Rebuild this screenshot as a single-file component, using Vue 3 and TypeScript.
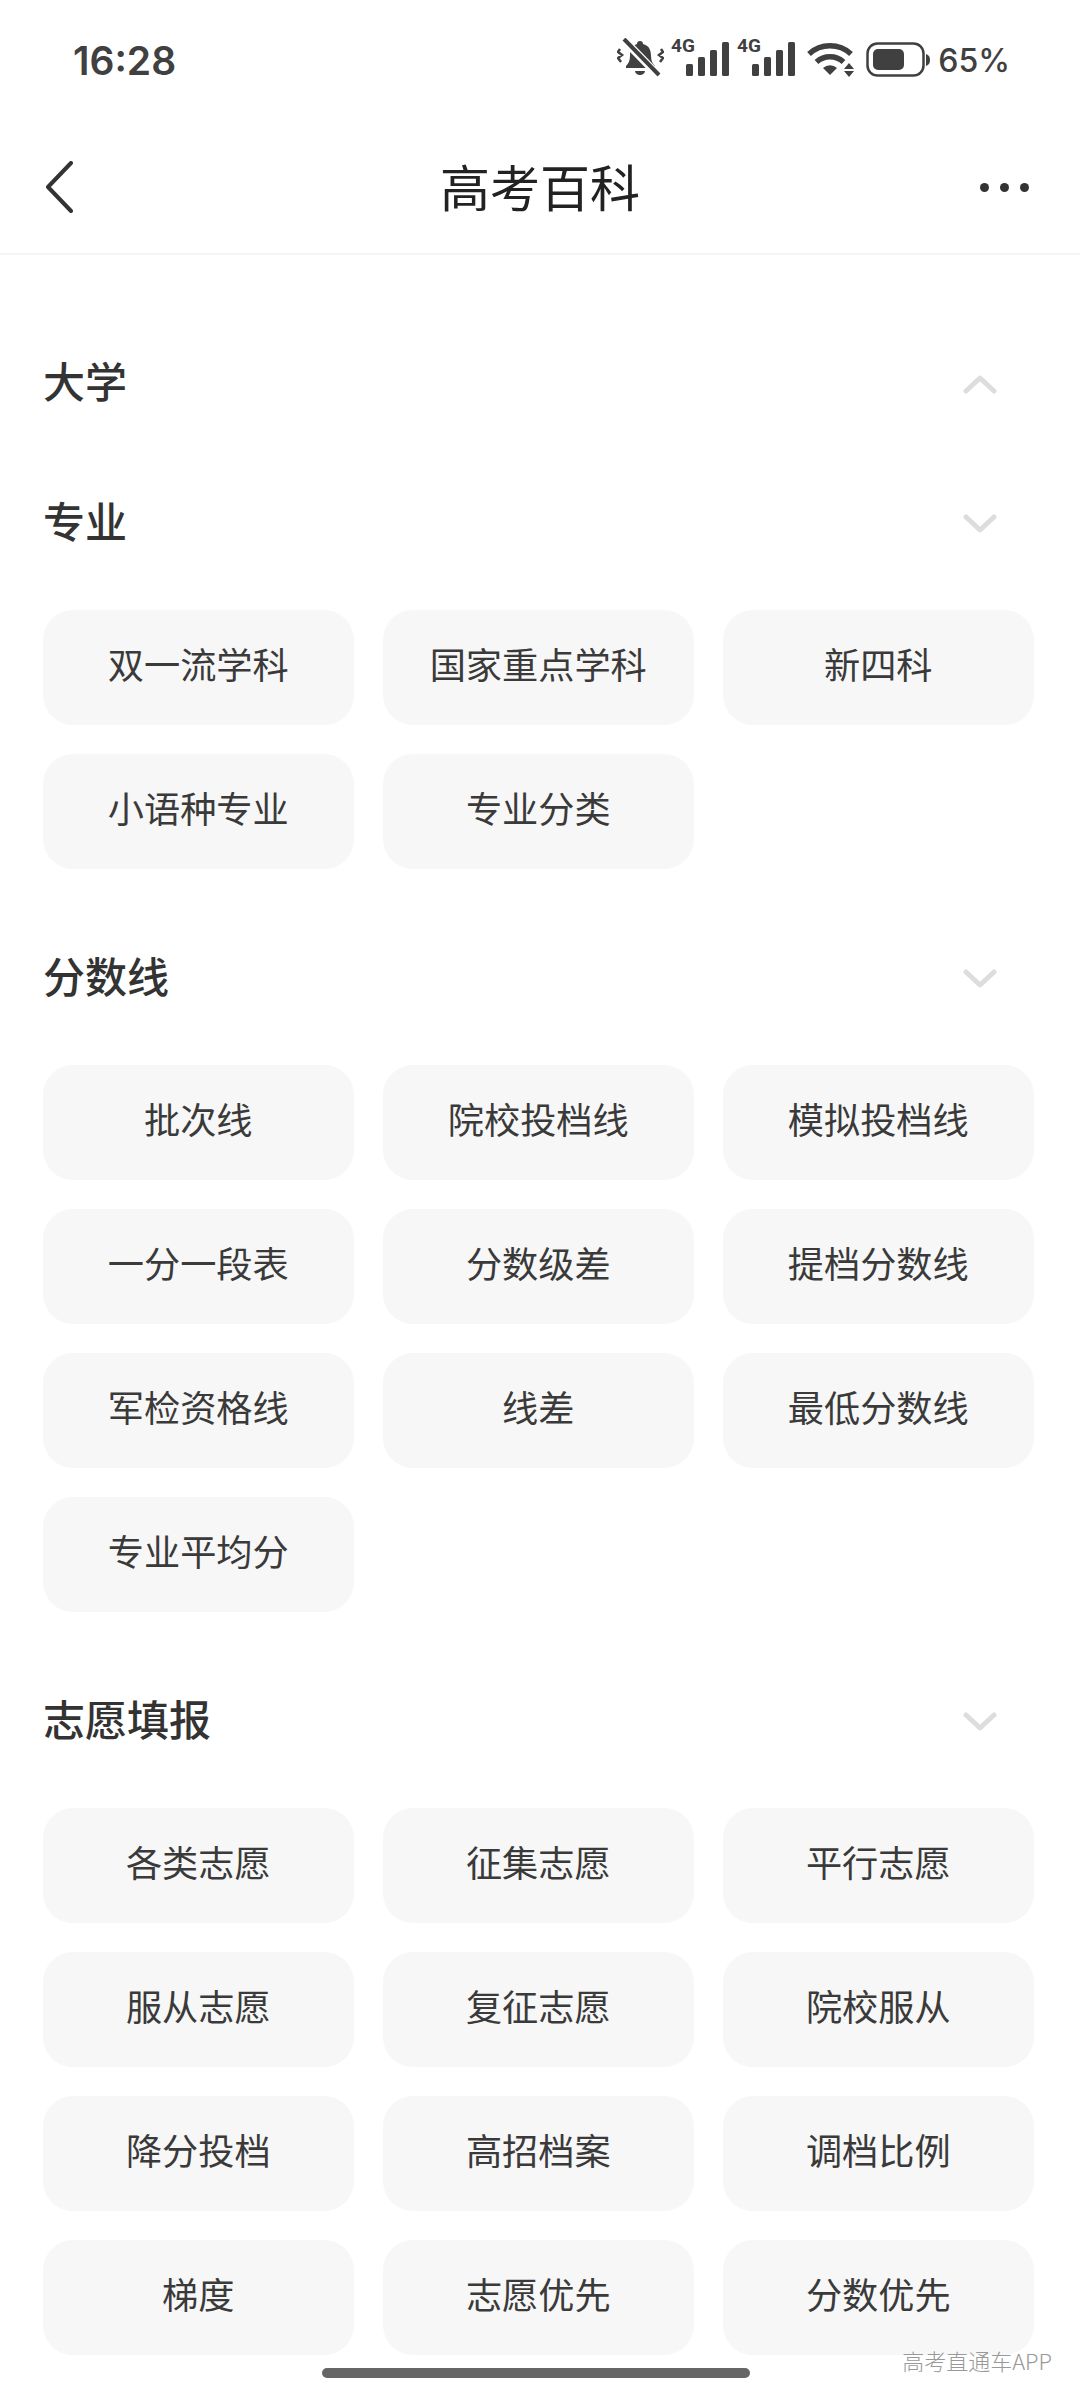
<script setup lang="ts">
interface Section {
  title: string
  open: boolean
  items: string[]
}

const sections: Section[] = [
  { title: '大学', open: true, items: [] },
  { title: '专业', open: false, items: ['双一流学科', '国家重点学科', '新四科', '小语种专业', '专业分类'] },
  {
    title: '分数线',
    open: false,
    items: ['批次线', '院校投档线', '模拟投档线', '一分一段表', '分数级差', '提档分数线', '军检资格线', '线差', '最低分数线', '专业平均分']
  },
  {
    title: '志愿填报',
    open: false,
    items: ['各类志愿', '征集志愿', '平行志愿', '服从志愿', '复征志愿', '院校服从', '降分投档', '高招档案', '调档比例', '梯度', '志愿优先', '分数优先']
  }
]
</script>

<template>
  <div class="page">
    <div class="status">
      <span class="time">16:28</span>
      <div class="status-icons">
        <svg class="bell" width="47" height="40" viewBox="0 0 47 40">
          <path d="M23 3a3 3 0 0 1 3 3c6 1.500 8 6 8 12 0 5 2 8 4 10v2H9v-2c2-2 4-5 4-10 0-6 2-10.500 7-12a3 3 0 0 1 3-3z" fill="#404040" />
          <path d="M18 33h10a5 4 0 0 1-10 0z" fill="#404040" />
          <path d="M7 2l34 35" stroke="#fff" stroke-width="8" />
          <path d="M7 1l35 36" stroke="#404040" stroke-width="4" fill="none" />
          <path d="M3 11l-2 3 4 3-4 3 3 4M44 11l2 3-4 3 4 3-3 4" stroke="#404040" stroke-width="2.500" fill="none" />
        </svg>
        <svg v-for="n in 2" :key="n" class="signal" width="58" height="40" viewBox="0 0 58 40">
          <text x="0" y="14" class="net">4G</text>
          <rect x="15" y="26" width="7" height="12" rx="1.500" fill="#404040" />
          <rect x="27" y="19" width="7" height="19" rx="1.500" fill="#404040" />
          <rect x="39" y="12" width="7" height="26" rx="1.500" fill="#404040" />
          <rect x="51" y="4" width="7" height="34" rx="1.500" fill="#404040" />
        </svg>
        <svg class="wifi" width="47" height="36" viewBox="0 0 47 36">
          <path d="M2 12a31 31 0 0 1 42 0" stroke="#404040" stroke-width="5.500" fill="none" />
          <path d="M9.500 20a20 20 0 0 1 27 0" stroke="#404040" stroke-width="5.500" fill="none" />
          <path d="M16 26a10 10 0 0 1 14 0l-7 7z" fill="#404040" />
          <path d="M42 21l5 6h-10zM42 35l5-6h-10z" fill="#404040" />
        </svg>
        <svg class="battery" width="64" height="36" viewBox="0 0 64 36">
          <rect x="1.500" y="1.500" width="56" height="32" rx="10" fill="none" stroke="#404040" stroke-width="2.500" />
          <rect x="7" y="7" width="31" height="21" rx="5" fill="#404040" />
          <path d="M60 12c3 1 4 3 4 6s-1 5-4 6z" fill="#404040" />
        </svg>
        <span class="percent">65%</span>
      </div>
    </div>

    <header class="nav">
      <svg class="back" width="28" height="52" viewBox="0 0 28 52">
        <path d="M26 2L3 26l23 24" fill="none" stroke="#333" stroke-width="4" stroke-linecap="round" stroke-linejoin="round" />
      </svg>
      <h1 class="nav-title">高考百科</h1>
      <div class="more">
        <i /><i /><i />
      </div>
    </header>

    <main class="content">
      <section v-for="section in sections" :key="section.title" class="section">
        <div class="section-head">
          <h2>{{ section.title }}</h2>
          <svg class="chevron" width="34" height="20" viewBox="0 0 34 20" :class="{ up: section.open }">
            <path d="M3 3l14 13L31 3" fill="none" stroke="#ddd" stroke-width="5" stroke-linecap="round" stroke-linejoin="round" />
          </svg>
        </div>
        <div v-if="section.items.length" class="chips">
          <div v-for="item in section.items" :key="item" class="chip">{{ item }}</div>
        </div>
      </section>
    </main>

    <div class="watermark">高考直通车APP</div>
    <div class="home-bar" />
  </div>
</template>

<style scoped>
.page {
  position: relative;
  width: 1080px;
  height: 2400px;
  overflow: hidden;
  background: #fff;
  color: #333;
  font-family: "Noto Sans CJK SC", "Noto Sans", sans-serif;
}

.status {
  display: flex;
  align-items: center;
  justify-content: space-between;
  height: 120px;
  padding: 0 70px 0 73px;
  box-sizing: border-box;
}

.time {
  font-family: Inter, Roboto, sans-serif;
  font-size: 39px;
  font-weight: 600;
  color: #404040;
}

.status-icons {
  display: flex;
  align-items: center;
  color: #404040;
}

.bell {
  margin-bottom: 4px;
}

.signal {
  margin: 0 0 4px 7px;
  overflow: visible;
}

.signal + .signal {
  margin-left: 8px;
}

.wifi,
.battery {
  margin-left: 12px;
}

.net {
  font-family: Roboto, sans-serif;
  font-size: 19px;
  font-weight: 700;
  fill: #404040;
}

.percent {
  margin-left: 8px;
  font-family: Inter, Roboto, sans-serif;
  font-size: 32px;
  font-weight: 500;
}

.nav {
  display: grid;
  grid-template-columns: 1fr auto 1fr;
  align-items: center;
  height: 135px;
  padding: 0 51px 0 45px;
  border-bottom: 2px solid #f4f4f4;
  box-sizing: border-box;
}

.nav-title {
  margin: 0 0 3px 6px;
  font-size: 50px;
  font-weight: 400;
  color: #222;
}

.more {
  display: flex;
  justify-content: flex-end;
  gap: 11px;
  margin-top: 2px;
}

.more i {
  display: block;
  width: 9px;
  height: 9px;
  border-radius: 50%;
  background: #333;
}

.content {
  padding: 57px 46px 0 43px;
}

.section-head {
  display: flex;
  align-items: center;
  justify-content: space-between;
  height: 140px;
  padding-right: 37px;
}

.section-head h2 {
  margin: 0 0 5px;
  font-size: 42px;
  font-weight: 500;
  color: #333;
}

.chevron {
  margin-top: 3px;
}

.chevron.up {
  transform: rotate(180deg);
}

.chips {
  display: grid;
  grid-template-columns: repeat(3, 310.5px);
  gap: 29px 29.5px;
  margin: 18px 0 38px;
}

.chip {
  display: flex;
  align-items: center;
  justify-content: center;
  height: 115px;
  padding-bottom: 9px;
  box-sizing: border-box;
  border-radius: 30px;
  background: #f7f7f7;
  font-size: 36.2px;
  color: #3a3a3a;
}

.watermark {
  position: absolute;
  right: 28px;
  top: 2344px;
  font-size: 22px;
  font-weight: 300;
  color: #999;
}

.home-bar {
  position: absolute;
  left: 322px;
  bottom: 22px;
  width: 428px;
  height: 10px;
  border-radius: 5px;
  background: #666;
}
</style>
